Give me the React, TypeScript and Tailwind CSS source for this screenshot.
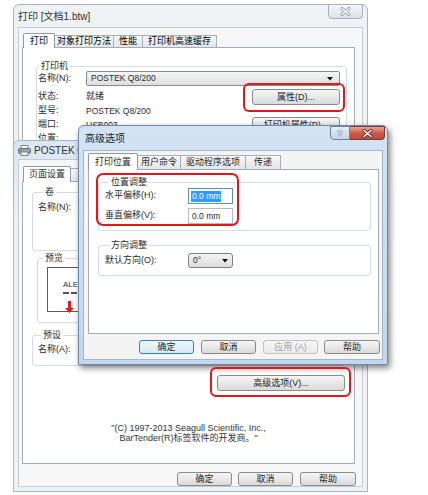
import type { ReactNode } from "react";

// Three overlapping Win7 dialogs: print dialog at the back, printer properties, advanced options on top.
const FONT = "font-['Liberation_Sans','Noto_Sans_CJK_SC',sans-serif]";

type Tab = { label: string; w: string };

function TabRow({ tabs, h, className = "" }: { tabs: Tab[]; h: string; className?: string }) {
  return (
    <div className={`flex items-stretch ${h} ${className}`}>
      {tabs.map((t, i) =>
        i === 0 ? (
          <div
            key={t.label}
            className={`relative z-10 -mb-px flex items-center justify-center rounded-t-[2px] border border-b-0 border-[#8d9aa8] bg-white text-[9px] leading-none ${t.w}`}
          >
            {t.label}
          </div>
        ) : (
          <div
            key={t.label}
            className={`mt-[2px] -ml-px flex items-center justify-center overflow-hidden whitespace-nowrap border border-b-0 border-[#a6b0bb] bg-linear-to-b from-[#f7f7f7] to-[#e3e6e9] text-[9px] leading-none ${t.w}`}
          >
            {t.label}
          </div>
        )
      )}
    </div>
  );
}

function Btn({
  children,
  className = "",
  primary = false,
  disabled = false,
}: {
  children: ReactNode;
  className?: string;
  primary?: boolean;
  disabled?: boolean;
}) {
  const tone = primary
    ? "border-[#3c7fb1] from-[#eef7fd] to-[#d6ebf8] text-[#1e1e1e]"
    : disabled
      ? "border-[#c2c2c2] from-[#f6f6f6] to-[#ebebeb] text-[#a3a3a3]"
      : "border-[#8a8a8a] from-[#f6f6f6] to-[#dadada] text-[#1e1e1e]";
  return (
    <div
      className={`flex shrink-0 items-center justify-center rounded-[3px] border bg-linear-to-b text-[9px] leading-none ${tone} ${className}`}
    >
      {children}
    </div>
  );
}

function Group({
  label,
  legend,
  className = "",
  children,
}: {
  label: string;
  legend: string;
  className?: string;
  children?: ReactNode;
}) {
  return (
    <fieldset className={`rounded-[3px] border border-[#d3dce3] ${className}`}>
      <legend className={`px-[2px] text-[9px] leading-[10px] ${legend}`}>{label}</legend>
      {children}
    </fieldset>
  );
}

function DropArrow() {
  return (
    <svg width="6" height="4" viewBox="0 0 6 4">
      <path d="M0 0h6L3 3.5z" fill="#111" />
    </svg>
  );
}

function CrossIcon({ color, stroke }: { color: string; stroke: string }) {
  return (
    <svg width="11" height="9" viewBox="0 0 11 9">
      <path d="M2 1.5l7 6M9 1.5l-7 6" stroke={stroke} strokeWidth="3.2" strokeLinecap="round" />
      <path d="M2 1.5l7 6M9 1.5l-7 6" stroke={color} strokeWidth="1.6" strokeLinecap="round" />
    </svg>
  );
}

function PrinterIcon() {
  return (
    <svg width="13" height="11" viewBox="0 0 13 11">
      <rect x="3" y="0.5" width="7" height="3" fill="#fff" stroke="#7d8791" />
      <rect x="0.5" y="3.5" width="12" height="5" rx="1" fill="#9aa4ae" stroke="#5f6b76" />
      <rect x="3" y="7" width="7" height="3.5" fill="#f4f4f4" stroke="#7d8791" />
      <rect x="2" y="5" width="2" height="1" fill="#3a8f3a" />
    </svg>
  );
}

function PrintDialog() {
  return (
    <div className="absolute left-[13px] top-[4px] flex h-[200px] w-[355px] flex-col rounded-t-[6px] border border-[#aab3bc] bg-[#eff2f5]">
      <div className="flex h-[22px] shrink-0 items-center pl-[4px] text-[10px] text-[#333]">打印 [文档1.btw]</div>
      <div className="absolute right-[4px] top-[-1px] flex h-[15px] w-[35px] items-center justify-center rounded-b-[4px] border border-[#a6b0ba] bg-linear-to-b from-[#f4f6f8] to-[#dde2e7]">
        <CrossIcon color="#f3f5f7" stroke="#9aa4ae" />
      </div>
      <div className="mx-[4px] flex-1 border border-[#c5ccd3] bg-[#f7f7f7] pl-[3px] pr-[7px] pt-[5px]">
        <TabRow
          h="h-[14px]"
          className="pl-[1px]"
          tabs={[
            { label: "打印", w: "w-[32px]" },
            { label: "对象打印方法", w: "w-[60px]" },
            { label: "性能", w: "w-[30px]" },
            { label: "打印机高速缓存", w: "w-[75px]" },
          ]}
        />
        <div className="h-[200px] border border-[#a3acb5] bg-white pl-[13px] pr-[9px] pt-[13px] text-[#2a2a2a]">
          <Group label="打印机" legend="ml-px" className="pl-px pr-[6px]">
            <div className="flex h-[15px] items-center text-[9px]">
              <span className="w-[48px]">名称(N):</span>
              <div className="flex h-[15px] w-[254px] items-center justify-between rounded-[2px] border border-[#8a8a8a] bg-linear-to-b from-[#f6f6f6] to-[#dedede] pl-[4px] pr-[6px] text-[8.5px]">
                POSTEK Q8/200
                <DropArrow />
              </div>
            </div>
            <div className="mt-[4px] flex h-[14px] items-center text-[9px]">
              <span className="w-[48px]">状态:</span>
              <span className="flex-1">就绪</span>
              <Btn className="h-[16px] w-[88px]">属性(D)...</Btn>
            </div>
            <div className="flex h-[14px] items-center text-[9px]">
              <span className="w-[48px]">型号:</span>
              <span className="flex-1 text-[8.5px]">POSTEK Q8/200</span>
            </div>
            <div className="flex h-[14px] items-center text-[9px]">
              <span className="w-[48px]">端口:</span>
              <span className="flex-1 text-[8.5px]">USB003</span>
              <Btn className="h-[16px] w-[88px]">打印机属性(P)...</Btn>
            </div>
            <div className="flex h-[14px] items-center text-[9px]">
              <span className="w-[48px]">位置:</span>
            </div>
          </Group>
        </div>
      </div>
    </div>
  );
}

function PropertiesDialog() {
  return (
    <div className="absolute left-[13px] top-[140px] flex h-[352px] w-[355px] flex-col rounded-t-[6px] border border-[#a9b6c4] bg-linear-to-b from-[#d9e6f3] to-[#eff2f5] to-[25%]">
      <div className="flex h-[18px] shrink-0 items-center gap-[3px] pl-[4px] text-[10px] text-[#333]">
        <PrinterIcon />
        POSTEK Q8/200 属性
      </div>
      <div className="mx-[4px] mb-[4px] flex flex-1 flex-col border border-[#c5ccd3] bg-[#f7f7f7] pl-[3px] pr-[6px] pt-[6px] text-[#2a2a2a]">
        <TabRow
          h="h-[15px]"
          className="pl-[1px]"
          tabs={[
            { label: "页面设置", w: "w-[48px]" },
            { label: "图形", w: "w-[46px]" },
          ]}
        />
        <div className="mr-px flex h-[283px] flex-col border border-[#a3acb5] bg-white">
          <Group label="卷" legend="ml-[5px]" className="mx-[9px] mt-[5px] h-[64px] pl-[5px]">
            <div className="mt-[5px] flex h-[12px] items-center text-[9px]">名称(N):</div>
          </Group>
          <Group label="预览" legend="ml-[5px]" className="ml-[14px] mt-[2px] h-[70px] w-[160px]">
            <div className="relative ml-[9px] mt-[4px] h-[45px] w-[70px] border border-[#5a5a5a] bg-white pl-[15px] pt-[12px]">
              <div className="text-[8px] leading-[10px] text-[#333]">ALE</div>
              <div className="mt-[2px] w-[22px] border-t-[2px] border-dashed border-[#555]" />
              <svg className="absolute bottom-[-2px] left-[17px]" width="9" height="12" viewBox="0 0 9 12">
                <path d="M3 0h3v7h3l-4.5 5L0 7h3z" fill="#e01b1b" />
              </svg>
            </div>
          </Group>
          <Group label="预设" legend="ml-[3px]" className="mx-[9px] mt-[7px] h-[36px] pl-[5px]">
            <div className="mt-[4px] flex h-[12px] items-center text-[9px]">名称(A):</div>
          </Group>
          <div className="mt-[9px] flex pl-[194px]">
            <Btn className="h-[16px] w-[128px]">高级选项(V)...</Btn>
          </div>
          <div className="mt-[32px] text-center text-[9px] leading-[10px] text-[#333]">
            <div>"(C) 1997-2013 Seagull Scientific, Inc.,</div>
            <div>BarTender(R)标签软件的开发商。"</div>
          </div>
        </div>
        <div className="mt-[8px] flex justify-end">
          <Btn className="h-[14px] w-[55px]">确定</Btn>
          <Btn className="ml-[6px] h-[14px] w-[55px]">取消</Btn>
          <Btn className="ml-[7px] h-[14px] w-[56px]">帮助</Btn>
        </div>
      </div>
    </div>
  );
}

function AdvancedDialog() {
  return (
    <div className="absolute left-[78px] top-[125px] flex h-[240px] w-[310px] flex-col rounded-t-[6px] border border-[#6f8aa6] bg-linear-to-b from-[#d3e3f3] to-[#c3d7ec] shadow-[2px_3px_6px_rgba(0,0,0,0.5)]">
      <div className="flex h-[24px] shrink-0 items-center pl-[6px] text-[10px] text-[#222]">高级选项</div>
      <div className="absolute right-[2px] top-0 flex">
        <div className="flex h-[14px] w-[20px] items-center justify-center rounded-bl-[4px] border border-[#6e8399] bg-linear-to-b from-[#e6eef6] to-[#c4d4e5] text-[9px] font-bold leading-none text-[#eef3f8] [text-shadow:0_0_1px_#44525f,0_0_1px_#44525f]">
          ?
        </div>
        <div className="flex h-[14px] w-[35px] items-center justify-center rounded-br-[4px] border border-l-0 border-[#7e3a33] bg-linear-to-b from-[#e9a597] via-[#cc5b4a] to-[#c24737]">
          <CrossIcon color="#ffffff" stroke="#6b2b24" />
        </div>
      </div>
      <div className="mx-[4px] mb-[4px] flex flex-1 flex-col border border-[#a5b6c8] bg-[#f4f4f4] pl-[4px] pr-[2px] pt-[2px] text-[#2a2a2a]">
        <TabRow
          h="h-[16px]"
          tabs={[
            { label: "打印位置", w: "w-[50px]" },
            { label: "用户命令", w: "w-[44px]" },
            { label: "驱动程序选项", w: "w-[66px]" },
            { label: "传递", w: "w-[36px]" },
          ]}
        />
        <div className="mr-px h-[165px] border border-[#a3acb5] bg-white">
          <Group label="位置调整" legend="ml-[4px]" className="ml-[9px] mr-[7px] mt-[7px] pb-[6px] pl-[6px]">
            <div className="mt-px flex h-[16px] items-center text-[9px]">
              <span className="w-[83px]">水平偏移(H):</span>
              <div className="flex h-[16px] w-[45px] items-center border border-[#5a8fc4] bg-white pl-[2px] text-[8.5px]">
                <span className="bg-[#3399ff] px-px leading-[11px] text-white">0.0 mm</span>
              </div>
            </div>
            <div className="mt-[4px] flex h-[16px] items-center text-[9px]">
              <span className="w-[83px]">垂直偏移(V):</span>
              <div className="flex h-[16px] w-[45px] items-center border border-[#b5bac2] bg-white pl-[3px] text-[8.5px]">
                0.0 mm
              </div>
            </div>
          </Group>
          <Group label="方向调整" legend="ml-[4px]" className="ml-[9px] mr-[7px] mt-[9px] pb-[7px] pl-[6px]">
            <div className="mt-[3px] flex h-[15px] items-center text-[9px]">
              <span className="w-[83px]">默认方向(O):</span>
              <div className="flex h-[15px] w-[45px] items-center justify-between rounded-[3px] border border-[#7f7f7f] bg-linear-to-b from-[#f4f4f4] to-[#dcdcdc] pl-[4px] pr-[4px] text-[8.5px]">
                0°
                <DropArrow />
              </div>
            </div>
          </Group>
        </div>
        <div className="mt-[6px] flex justify-end">
          <Btn primary className="h-[14px] w-[55px]">确定</Btn>
          <Btn className="ml-[7px] h-[14px] w-[55px]">取消</Btn>
          <Btn disabled className="ml-[7px] h-[14px] w-[55px]">应用 (A)</Btn>
          <Btn className="ml-[6px] h-[14px] w-[56px]">帮助</Btn>
        </div>
      </div>
    </div>
  );
}

export default function App() {
  return (
    <div className={`relative h-[495px] w-[428px] overflow-hidden bg-white ${FONT}`}>
      <PrintDialog />
      <PropertiesDialog />
      <AdvancedDialog />
      {/* red call-outs drawn over the screenshot */}
      <div className="absolute left-[243px] top-[83px] h-[29px] w-[102px] rounded-[6px] border-2 border-[#e3161b]" />
      <div className="absolute left-[96px] top-[173px] h-[53px] w-[143px] rounded-[7px] border-2 border-[#e3161b]" />
      <div className="absolute left-[210px] top-[367px] h-[30px] w-[141px] rounded-[6px] border-2 border-[#e3161b]" />
    </div>
  );
}
